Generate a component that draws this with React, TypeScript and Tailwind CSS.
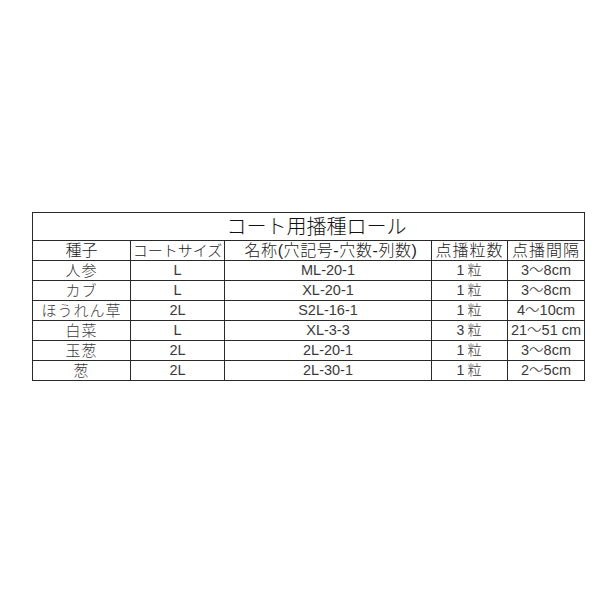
import React from "react";

const rows = [
  ["人参", "L", "ML-20-1", "1粒", "3～8cm"],
  ["カブ", "L", "XL-20-1", "1粒", "3～8cm"],
  ["ほうれん草", "2L", "S2L-16-1", "1粒", "4～10cm"],
  ["白菜", "L", "XL-3-3", "3粒", "21～51 cm"],
  ["玉葱", "2L", "2L-20-1", "1粒", "3～8cm"],
  ["葱", "2L", "2L-30-1", "1粒", "2～5cm"],
];

export default function App() {
  return (
    <div
      className="w-[615px] h-[615px] bg-white pt-[212px] pl-[32px] font-light"
      style={{ fontFamily: '"Liberation Sans", "Noto Sans CJK JP", sans-serif' }}
    >
      <table className="table-fixed border-collapse w-[552px] border border-[#2a2a2a]">
        <colgroup>
          <col className="w-[98px]" />
          <col className="w-[94px]" />
          <col className="w-[207px]" />
          <col className="w-[76px]" />
          <col className="w-[77px]" />
        </colgroup>
        <tbody>
          <tr className="h-[27px]">
            <td colSpan={5} className="border-b border-[#2a2a2a] text-center text-[20px] leading-[26px] text-[#111] p-0 pt-[1px] pl-[16px]">
              コート用播種ロール
            </td>
          </tr>
          <tr className="h-[20px]">
            {["種子", "コートサイズ", "名称(穴記号-穴数-列数)", "点播粒数", "点播間隔"].map((h, i) => (
              <td
                key={i}
                className={`border border-[#2a2a2a] text-center p-0 leading-[19px] text-[#1a1a1a] whitespace-nowrap ${i === 1 ? "text-[15px]" : "text-[16px]"} ${i === 3 || i === 4 ? "tracking-[1px]" : i === 2 ? "tracking-[0.6px] pl-[6px]" : ""}`}
              >
                {h}
              </td>
            ))}
          </tr>
          {rows.map((r, ri) => (
            <tr key={ri} className="h-[20px]">
              {r.map((c, ci) => (
                <td
                  key={ci}
                  className={`border border-[#2a2a2a] text-center p-0 leading-[19px] text-[#3a3a3a] whitespace-nowrap ${ci === 0 ? "text-[15px] tracking-[1px]" : ci === 3 ? "text-[14px] tracking-[3px] pl-[2px]" : "text-[14.5px]"}`}
                >
                  {c}
                </td>
              ))}
            </tr>
          ))}
        </tbody>
      </table>
    </div>
  );
}
